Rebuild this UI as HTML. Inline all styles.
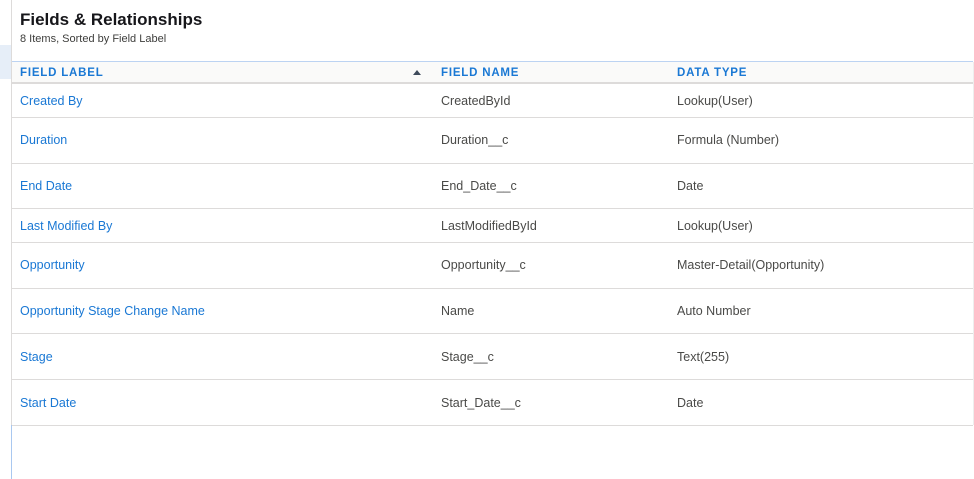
<!DOCTYPE html>
<html><head><style>
*{margin:0;padding:0;box-sizing:border-box}
body{width:974px;height:479px;background:#fff;font-family:"Liberation Sans",sans-serif;position:relative;overflow:hidden}
.a{position:absolute;white-space:nowrap}
.vl{position:absolute;left:11px;width:1px;background:#dddbda}
.hl{position:absolute;left:12px;width:961px;height:1px;background:#dddbda}
.l{color:#1a78d4;font-size:12.5px;left:20px}
.t{color:#4a4a48;font-size:12.5px}
.h{color:#1a78d4;font-size:11.5px;font-weight:bold;letter-spacing:0.8px;top:67px}
</style></head><body>
<div class="a" style="left:0;top:45px;width:11px;height:34px;background:#e6eef8"></div>
<div class="vl" style="top:0;height:425px"></div>
<div class="vl" style="top:425px;height:54px;background:#a9c8f0"></div>
<div class="a" style="left:973px;top:62px;width:1px;height:363px;background:#eee"></div>
<div class="a" style="left:20px;top:10px;font-size:17px;font-weight:bold;color:#16161a">Fields &amp; Relationships</div>
<div class="a" style="left:20px;top:33px;font-size:11px;color:#3e3e3c">8 Items, Sorted by Field Label</div>
<div class="a" style="left:12px;top:61px;width:961px;height:23px;background:#fafaf9;border-top:1px solid #bcd3f2;border-bottom:2px solid #dddbda"></div>
<div class="a h" style="left:20px">FIELD LABEL</div>
<div class="a" style="left:413px;top:70px;width:0;height:0;border-left:4px solid transparent;border-right:4px solid transparent;border-bottom:5px solid #3e4a5b"></div>
<div class="a h" style="left:441px">FIELD NAME</div>
<div class="a h" style="left:677px">DATA TYPE</div>
<div class="hl" style="top:117px"></div>
<div class="hl" style="top:163px"></div>
<div class="hl" style="top:208px"></div>
<div class="hl" style="top:242px"></div>
<div class="hl" style="top:288px"></div>
<div class="hl" style="top:333px"></div>
<div class="hl" style="top:379px"></div>
<div class="hl" style="top:425px"></div>
<div class="a l" style="top:94px">Created By</div><div class="a t" style="left:441px;top:94px">CreatedById</div><div class="a t" style="left:677px;top:94px">Lookup(User)</div>
<div class="a l" style="top:133px">Duration</div><div class="a t" style="left:441px;top:133px">Duration__c</div><div class="a t" style="left:677px;top:133px">Formula (Number)</div>
<div class="a l" style="top:179px">End Date</div><div class="a t" style="left:441px;top:179px">End_Date__c</div><div class="a t" style="left:677px;top:179px">Date</div>
<div class="a l" style="top:219px">Last Modified By</div><div class="a t" style="left:441px;top:219px">LastModifiedById</div><div class="a t" style="left:677px;top:219px">Lookup(User)</div>
<div class="a l" style="top:258px">Opportunity</div><div class="a t" style="left:441px;top:258px">Opportunity__c</div><div class="a t" style="left:677px;top:258px">Master-Detail(Opportunity)</div>
<div class="a l" style="top:304px">Opportunity Stage Change Name</div><div class="a t" style="left:441px;top:304px">Name</div><div class="a t" style="left:677px;top:304px">Auto Number</div>
<div class="a l" style="top:350px">Stage</div><div class="a t" style="left:441px;top:350px">Stage__c</div><div class="a t" style="left:677px;top:350px">Text(255)</div>
<div class="a l" style="top:396px">Start Date</div><div class="a t" style="left:441px;top:396px">Start_Date__c</div><div class="a t" style="left:677px;top:396px">Date</div>
</body></html>
